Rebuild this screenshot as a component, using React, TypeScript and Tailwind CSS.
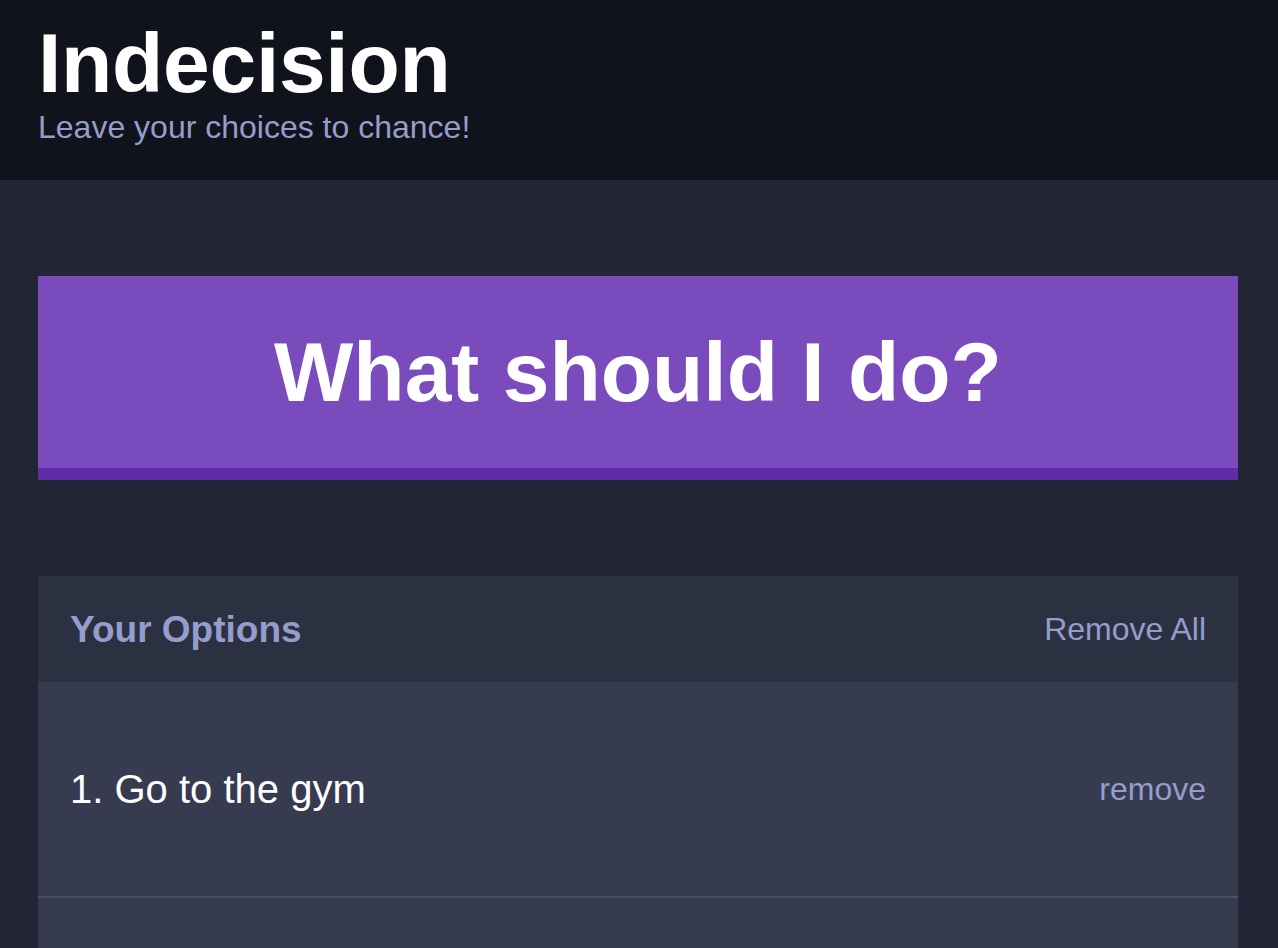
import React from 'react';

export default function App() {
  const options = ['Go to the gym'];

  return (
    <div className="min-h-screen bg-[#222533] font-['Liberation_Sans',Arial,sans-serif]">
      <header className="bg-[#10131c] pt-[21px] pb-[37px] pl-[38px]">
        <div className="w-[1200px]">
          <h1 className="text-[84px] leading-none font-bold text-white tracking-[-0.3px]">Indecision</h1>
          <h2 className="mt-[6px] text-[32px] leading-none text-[#959dcc]">Leave your choices to chance!</h2>
        </div>
      </header>

      <main className="pl-[38px] pt-[96px]">
        <div className="w-[1200px]">
          <button className="w-full h-[204px] bg-[#7a4bbd] border-b-[12px] border-[#5f2ea7] flex items-center justify-center text-white text-[84px] leading-none font-bold">
            What should I do?
          </button>

          <div className="mt-[96px]">
            <div className="h-[106px] bg-[#2c3142] px-[32px] flex items-center justify-between">
              <h3 className="text-[37px] leading-none font-bold text-[#959dcc]">Your Options</h3>
              <button className="text-[32px] leading-none text-[#959dcc]">Remove All</button>
            </div>
            {options.map((option, index) => (
              <div
                key={option}
                className="h-[216px] bg-[#373b50] border-b-2 border-[#4a4f67] px-[32px] flex items-center justify-between"
              >
                <p className="text-[40px] leading-none text-white">
                  {index + 1}. {option}
                </p>
                <button className="text-[32px] leading-none text-[#959dcc]">remove</button>
              </div>
            ))}
            {/* add-option form sits below the fold */}
            <div className="h-[120px] bg-[#373b50]" />
          </div>
        </div>
      </main>
    </div>
  );
}
